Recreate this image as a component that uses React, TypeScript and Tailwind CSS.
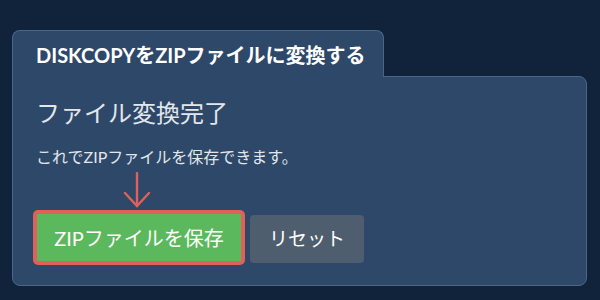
export default function App() {
  return (
    <div
      className="h-[300px] w-[600px] bg-[#10233a] px-3 pt-[30px]"
      style={{ fontFamily: 'Lato, "Noto Sans CJK JP", sans-serif' }}
    >
      <div className="relative z-10 -mb-px flex h-[47px] w-[372px] items-center rounded-t-lg border border-b-0 border-[#4b6788] bg-[#2d4869] pl-[23px] pt-px">
        <span className="text-[20px] font-bold leading-none text-white">
          DISKCOPYをZIPファイルに変換する
        </span>
      </div>
      <div className="h-[210px] w-[575px] rounded-b-lg rounded-tr-lg border border-[#4b6788] bg-[#2d4869] pl-[20px] pt-[24px]">
        <div className="pl-[3px]">
          <h1 className="text-[24px] leading-none text-[#e3e7ec]">ファイル変換完了</h1>
          <p className="mt-[24px] text-[16px] leading-none text-[#e3e7ec]">
            これでZIPファイルを保存できます。
          </p>
        </div>
        <div className="mt-[7px] flex w-[208px] justify-center">
          <svg width="28" height="36" viewBox="0 0 28 36" fill="none" stroke="#e0605a" strokeWidth="2.4" strokeLinecap="round">
            <path d="M14 1 V34" />
            <path d="M2 21 L14 34 L26 21" />
          </svg>
        </div>
        <div className="mt-[2px] flex items-start gap-[5px]">
          <button className="flex h-[55px] w-[212px] items-center justify-center rounded-[5px] border-4 border-[#e0605a] bg-[#5cb85c] text-[20px] text-white">
            ZIPファイルを保存
          </button>
          <button className="mt-[5px] flex h-[48px] w-[114px] items-center justify-center rounded-[4px] bg-[#4f5e6e] text-[19px] text-white">
            リセット
          </button>
        </div>
      </div>
    </div>
  );
}
